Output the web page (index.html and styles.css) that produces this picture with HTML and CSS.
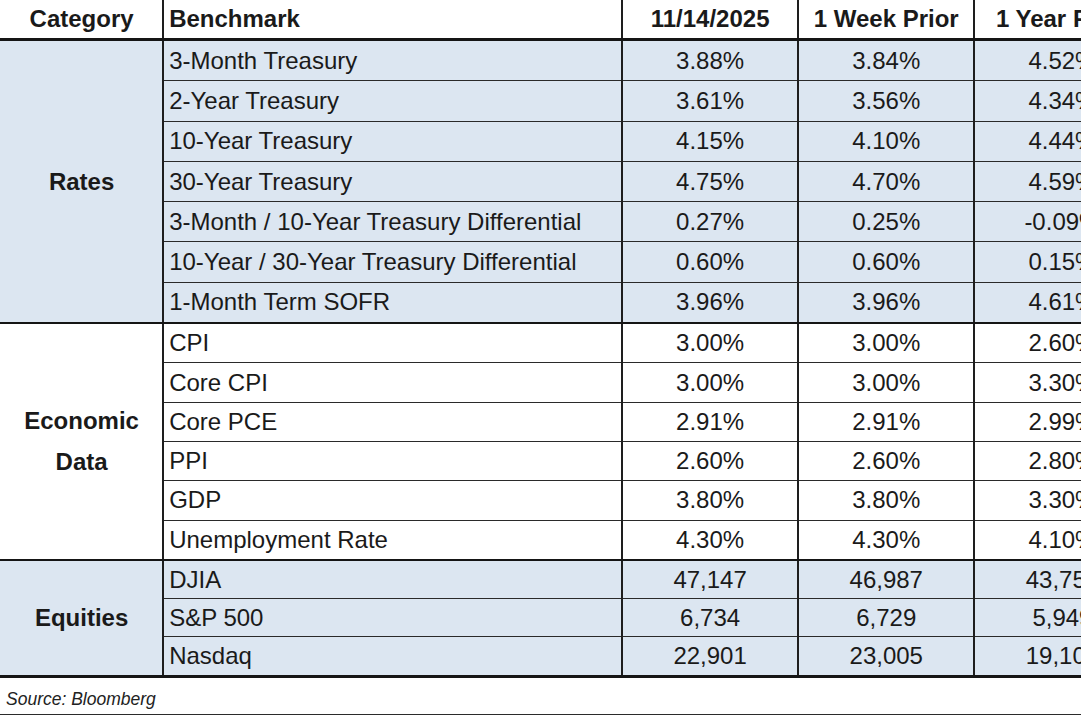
FILE: index.html
```html
<!DOCTYPE html>
<html lang="en">
<head>
<meta charset="utf-8">
<title>Market Benchmarks</title>
<link rel="stylesheet" href="styles.css">
</head>
<body>
<div class="sheet">
  <table class="bench">
    <colgroup>
      <col class="c-cat">
      <col class="c-bench">
      <col class="c-num">
      <col class="c-num">
      <col class="c-num">
    </colgroup>
    <thead>
      <tr>
        <th class="cat">Category</th>
        <th class="name">Benchmark</th>
        <th>11/14/2025</th>
        <th>1 Week Prior</th>
        <th>1 Year Prior</th>
      </tr>
    </thead>
    <tbody class="grp blue rates">
      <tr><td class="cat" rowspan="7">Rates</td><td class="name">3-Month Treasury</td><td>3.88%</td><td>3.84%</td><td>4.52%</td></tr>
      <tr><td class="name">2-Year Treasury</td><td>3.61%</td><td>3.56%</td><td>4.34%</td></tr>
      <tr><td class="name">10-Year Treasury</td><td>4.15%</td><td>4.10%</td><td>4.44%</td></tr>
      <tr><td class="name">30-Year Treasury</td><td>4.75%</td><td>4.70%</td><td>4.59%</td></tr>
      <tr><td class="name">3-Month / 10-Year Treasury Differential</td><td>0.27%</td><td>0.25%</td><td>-0.09%</td></tr>
      <tr><td class="name">10-Year / 30-Year Treasury Differential</td><td>0.60%</td><td>0.60%</td><td>0.15%</td></tr>
      <tr><td class="name">1-Month Term SOFR</td><td>3.96%</td><td>3.96%</td><td>4.61%</td></tr>
    </tbody>
    <tbody class="grp econ">
      <tr><td class="cat wrap" rowspan="6">Economic Data</td><td class="name">CPI</td><td>3.00%</td><td>3.00%</td><td>2.60%</td></tr>
      <tr><td class="name">Core CPI</td><td>3.00%</td><td>3.00%</td><td>3.30%</td></tr>
      <tr><td class="name">Core PCE</td><td>2.91%</td><td>2.91%</td><td>2.99%</td></tr>
      <tr><td class="name">PPI</td><td>2.60%</td><td>2.60%</td><td>2.80%</td></tr>
      <tr><td class="name">GDP</td><td>3.80%</td><td>3.80%</td><td>3.30%</td></tr>
      <tr><td class="name">Unemployment Rate</td><td>4.30%</td><td>4.30%</td><td>4.10%</td></tr>
    </tbody>
    <tbody class="grp blue eq">
      <tr><td class="cat" rowspan="3">Equities</td><td class="name">DJIA</td><td>47,147</td><td>46,987</td><td>43,750</td></tr>
      <tr><td class="name">S&amp;P 500</td><td>6,734</td><td>6,729</td><td>5,949</td></tr>
      <tr><td class="name">Nasdaq</td><td>22,901</td><td>23,005</td><td>19,107</td></tr>
    </tbody>
  </table>
  <div class="source">Source: Bloomberg</div>
</div>
</body>
</html>
```

FILE: styles.css
```css
html, body {
  margin: 0;
  padding: 0;
  background: #ffffff;
}

body {
  width: 1081px;
  height: 715px;
  overflow: hidden;
}

.sheet {
  width: 1151px;
}

.bench {
  border-collapse: collapse;
  table-layout: fixed;
  width: 1151px;
  font-family: "Liberation Sans", Arial, sans-serif;
  font-size: 24px;
  color: #1a1a1a;
}

.c-cat { width: 163px; }
.c-bench { width: 458px; }
.c-num { width: 176px; }

.bench th,
.bench td {
  padding: 0 4px 0 5px;
  text-align: center;
  vertical-align: middle;
  white-space: nowrap;
  border-left: 2px solid #1e1e1e;
  border-right: 2px solid #1e1e1e;
  border-top: 1px solid #2a2a2a;
  border-bottom: 1px solid #2a2a2a;
  line-height: 26px;
}

.bench th.cat,
.bench td.cat {
  border-left: none;
  font-weight: bold;
}

.bench thead th {
  height: 38px;
  font-weight: bold;
  border-top: none;
  border-bottom: 3px solid #151515;
}

.bench .name {
  text-align: left;
}

.bench td.wrap {
  white-space: normal;
  line-height: 41px;
}

.bench .blue td {
  background: #dce6f1;
}

.rates tr td { height: 39.3px; }
.econ tr td { height: 38.3px; }
.eq tr td { height: 37.3px; }

.bench tbody.grp tr:last-child td,
.bench tbody.grp td.cat {
  border-bottom: 2px solid #151515;
}

.bench tbody.eq tr:last-child td,
.bench tbody.eq td.cat {
  border-bottom: 3px solid #151515;
}

.source {
  width: 1081px;
  height: 38px;
  box-sizing: border-box;
  padding: 11px 0 0 6px;
  font-family: "Liberation Sans", Arial, sans-serif;
  font-style: italic;
  font-size: 17.5px;
  line-height: 20px;
  color: #222222;
  border-bottom: 2px solid #2b2b2b;
}
```
